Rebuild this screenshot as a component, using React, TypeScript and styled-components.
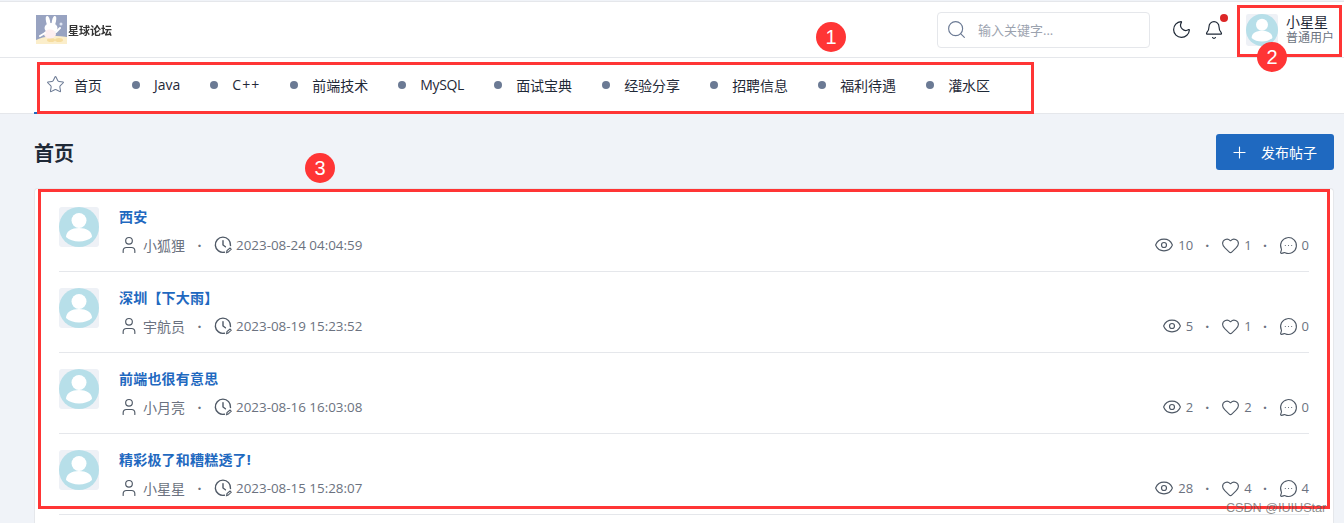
import React from 'react';
import styled, { createGlobalStyle } from 'styled-components';
import { Search, Moon, Bell, Star, Plus, User, Eye, Heart, MessageCircleMore } from 'lucide-react';

const GlobalStyle = createGlobalStyle`
  html, body { margin: 0; padding: 0; height: 523px; overflow: hidden; background: #f0f3f8; }
  body { font-family: "Open Sans", "Noto Sans CJK SC", sans-serif; color: #1f2937; }
  * { box-sizing: border-box; }
`;

const Page = styled.div`
  position: relative;
  width: 1344px;
  height: 523px;
  overflow: hidden;
  display: flex;
  flex-direction: column;
`;

const TopBar = styled.header`
  margin-top: 1px;
  height: 57px;
  flex: none;
  background: #fff;
  border-top: 1px solid #e5e7eb;
  border-bottom: 1px solid #e5e7eb;
  display: flex;
  align-items: center;
  padding: 0 10px 0 36px;
`;

const Brand = styled.div`
  display: flex;
  align-items: center;
  gap: 1px;
  filter: blur(0.35px);
`;

const BrandName = styled.span`
  font-size: 11px;
  font-weight: 700;
  color: #333;
`;

const SearchBox = styled.div`
  margin-left: auto;
  width: 213px;
  height: 36px;
  border: 1px solid #e5e7eb;
  border-radius: 4px;
  display: flex;
  align-items: center;
  gap: 11px;
  padding-left: 8px;
  font-size: 13px;
  color: #9ca3af;
`;

const IconButton = styled.div<{ $left: number }>`
  position: relative;
  margin-left: ${p => p.$left}px;
  display: flex;
  color: #1f2937;
`;

const Badge = styled.span`
  position: absolute;
  top: -6px;
  right: -4px;
  width: 8px;
  height: 8px;
  border-radius: 50%;
  background: #dc2626;
`;

const UserBlock = styled.div`
  margin-left: 22px;
  display: flex;
  align-items: center;
  gap: 8px;
`;

const UserText = styled.div`
  display: flex;
  flex-direction: column;
  line-height: 16px;
`;

const UserName = styled.span`
  font-size: 14px;
  color: #1f2937;
`;

const UserRole = styled.span`
  font-size: 12px;
  color: #6b7280;
`;

const Nav = styled.nav`
  height: 56px;
  flex: none;
  background: #fff;
  border-bottom: 1px solid #e5e7eb;
  display: flex;
  padding: 0 0 2px 34px;
`;

const NavItem = styled.a<{ $active?: boolean; $spacing?: number }>`
  display: flex;
  align-items: center;
  gap: ${p => (p.$active ? 9 : 14)}px;
  padding: 0 30px 0 ${p => (p.$active ? 12 : 0)}px;
  font-size: 14px;
  color: #1f2937;
  letter-spacing: ${p => p.$spacing ?? 0}px;
  white-space: nowrap;
`;

const ActiveMark = styled.span`
  position: absolute;
  left: 34px;
  top: 112px;
  width: 4px;
  height: 2px;
  background: #1f69c0;
`;

const Dot = styled.span`
  width: 8px;
  height: 8px;
  border-radius: 50%;
  background: #6b7a94;
`;

const Main = styled.main`
  flex: 1;
  padding: 20px 10px 0 34px;
  display: flex;
  flex-direction: column;
  min-height: 0;
`;

const TitleRow = styled.div`
  display: flex;
  align-items: center;
  justify-content: space-between;
  height: 36px;
  flex: none;
`;

const PageTitle = styled.h1`
  margin: 0;
  font-size: 20px;
  font-weight: 700;
  color: #1f2937;
`;

const PostButton = styled.button`
  width: 118px;
  height: 36px;
  border: none;
  border-radius: 3px;
  background: #1f69c0;
  color: #fff;
  font: inherit;
  font-size: 14px;
  display: flex;
  align-items: center;
  gap: 12px;
  padding: 0 0 0 14px;
`;

const Card = styled.section`
  margin-top: 18px;
  flex: 1;
  background: #fff;
  border: 1px solid #e5e7eb;
  border-bottom: none;
  border-radius: 4px 4px 0 0;
  padding: 2px 24px 0;
`;

const Row = styled.article`
  height: 81px;
  padding: 16px 0;
  border-bottom: 1px solid #e5e7eb;
  display: flex;
  gap: 20px;
`;

const Body = styled.div`
  flex: 1;
  display: flex;
  flex-direction: column;
  gap: 8px;
`;

const PostTitle = styled.a`
  font-size: 14px;
  line-height: 20px;
  font-weight: 700;
  color: #1f69c0;
  letter-spacing: 0.2px;
`;

const MetaLine = styled.div`
  display: flex;
  align-items: center;
  height: 20px;
  font-size: 14px;
  color: #6b7280;
`;

const MetaGroup = styled.span`
  display: flex;
  align-items: center;
  gap: 4px;
  white-space: nowrap;
  svg { color: #4f5966; }
`;

const TimeText = styled.span`
  font-size: 13.4px;
`;

const StatText = styled.span`
  font-size: 13px;
`;

const Sep = styled.span<{ $width?: number }>`
  width: ${p => p.$width ?? 27}px;
  text-align: center;
  font-weight: 700;
  flex: none;
`;

const Stats = styled.div`
  margin-left: auto;
  display: flex;
  align-items: center;
`;

const Annotation = styled.div`
  position: absolute;
  border: 3px solid #ff3535;
  pointer-events: none;
`;

const NavMarker = styled(Annotation)`
  left: 37px;
  top: 62px;
  width: 997px;
  height: 52px;
`;

const UserMarker = styled(Annotation)`
  left: 1237px;
  top: 5px;
  width: 105px;
  height: 52px;
`;

const ListMarker = styled(Annotation)`
  left: 38px;
  top: 189px;
  width: 1292px;
  height: 320px;
`;

const Pin = styled.span<{ $x: number; $y: number }>`
  position: absolute;
  left: ${p => p.$x - 15}px;
  top: ${p => p.$y - 15}px;
  width: 30px;
  height: 30px;
  border-radius: 50%;
  background: #ff3535;
  color: #fff;
  font-family: "Liberation Sans", sans-serif;
  font-size: 20px;
  display: flex;
  align-items: center;
  justify-content: center;
`;

const Watermark = styled.span`
  position: absolute;
  left: 1226px;
  top: 500px;
  font-family: "Liberation Sans", sans-serif;
  font-size: 12.6px;
  line-height: 16px;
  color: rgba(90, 90, 90, 0.7);
`;

const Avatar: React.FC<{ size: number }> = ({ size }) => (
  <svg width={size} height={size} viewBox="0 0 40 40" style={{ flex: 'none' }}>
    <rect width="40" height="40" rx="3" fill="#eef1f6" />
    <circle cx="20" cy="20" r="20" fill="#b7dfe9" />
    <circle cx="20" cy="13.5" r="7.5" fill="#fff" />
    <path d="M7 30c0-6 6-9 13-9s13 3 13 9c-3 2.800-8 4.500-13 4.500S10 32.800 7 30z" fill="#fff" />
  </svg>
);

const Logo = () => (
  <svg width="31" height="29" viewBox="0 0 31 29">
    <rect width="31" height="29" fill="#98a3c1" />
    <ellipse cx="20" cy="30" rx="24" ry="9" fill="#fbeecb" />
    <ellipse cx="15" cy="25" rx="4" ry="2" fill="#f6dc9f" />
    <ellipse cx="23" cy="25" rx="4" ry="2" fill="#f6dc9f" />
    <ellipse cx="12" cy="6" rx="2" ry="5" fill="#fff" transform="rotate(-12 12 6)" />
    <ellipse cx="18" cy="6" rx="2" ry="5" fill="#fff" transform="rotate(12 18 6)" />
    <ellipse cx="15" cy="13" rx="6.500" ry="5" fill="#fff" />
    <ellipse cx="14" cy="19" rx="6" ry="4.500" fill="#fdeef0" />
    <path d="M9 18l-5 3M20 17l4-4" stroke="#fff" strokeWidth="2" strokeLinecap="round" />
    <circle cx="25" cy="9" r="1.500" fill="#dfe5f3" />
  </svg>
);

// clock with a small pencil tag on its lower right
const ClockEdit = () => (
  <svg width="18" height="18" viewBox="0 0 18 18" fill="none" stroke="currentColor" strokeWidth="1.4" strokeLinecap="round" style={{ flex: 'none' }}>
    <path d="M10.500 16.200A7.600 7.600 0 1 1 16.500 9.500" />
    <path d="M9 4.600V9l2.400 1.800" />
    <path d="M12.600 16.600l.4-2 3-2.600 1.200 1.300-3 2.800z" strokeWidth="1.100" />
  </svg>
);

const TABS = [
  { label: 'Java' },
  { label: 'C++', spacing: 1 },
  { label: '前端技术' },
  { label: 'MySQL', spacing: -0.3 },
  { label: '面试宝典' },
  { label: '经验分享' },
  { label: '招聘信息' },
  { label: '福利待遇' },
  { label: '灌水区' },
];

const POSTS = [
  { title: '西安', author: '小狐狸', time: '2023-08-24 04:04:59', views: 10, likes: 1, comments: 0 },
  { title: '深圳【下大雨】', author: '宇航员', time: '2023-08-19 15:23:52', views: 5, likes: 1, comments: 0 },
  { title: '前端也很有意思', author: '小月亮', time: '2023-08-16 16:03:08', views: 2, likes: 2, comments: 0 },
  { title: '精彩极了和糟糕透了!', author: '小星星', time: '2023-08-15 15:28:07', views: 28, likes: 4, comments: 4 },
];

export default function App() {
  return (
    <Page>
      <GlobalStyle />
      <TopBar>
        <Brand>
          <Logo />
          <BrandName>星球论坛</BrandName>
        </Brand>
        <SearchBox>
          <Search size={21} strokeWidth={1.3} color="#6b7a94" />
          输入关键字...
        </SearchBox>
        <IconButton $left={21}>
          <Moon size={21} strokeWidth={1.4} />
        </IconButton>
        <IconButton $left={12}>
          <Bell size={20} strokeWidth={1.4} />
          <Badge />
        </IconButton>
        <UserBlock>
          <Avatar size={32} />
          <UserText>
            <UserName>小星星</UserName>
            <UserRole>普通用户</UserRole>
          </UserText>
        </UserBlock>
      </TopBar>

      <Nav>
        <NavItem $active>
          <Star size={19} strokeWidth={1.3} color="#6b7a94" />
          首页
        </NavItem>
        {TABS.map(tab => (
          <NavItem key={tab.label} $spacing={tab.spacing}>
            <Dot />
            {tab.label}
          </NavItem>
        ))}
      </Nav>
      <ActiveMark />

      <Main>
        <TitleRow>
          <PageTitle>首页</PageTitle>
          <PostButton>
            <Plus size={19} strokeWidth={1.4} />
            发布帖子
          </PostButton>
        </TitleRow>
        <Card>
          {POSTS.map(post => (
            <Row key={post.title}>
              <Avatar size={40} />
              <Body>
                <PostTitle>{post.title}</PostTitle>
                <MetaLine>
                  <MetaGroup>
                    <User size={20} strokeWidth={1.4} />
                    {post.author}
                  </MetaGroup>
                  <Sep $width={29}>·</Sep>
                  <MetaGroup>
                    <ClockEdit />
                    <TimeText>{post.time}</TimeText>
                  </MetaGroup>
                  <Stats>
                    <MetaGroup>
                      <Eye size={20} strokeWidth={1.4} />
                      <StatText>{post.views}</StatText>
                    </MetaGroup>
                    <Sep $width={28}>·</Sep>
                    <MetaGroup>
                      <Heart size={19} strokeWidth={1.4} />
                      <StatText>{post.likes}</StatText>
                    </MetaGroup>
                    <Sep>·</Sep>
                    <MetaGroup>
                      <MessageCircleMore size={19} strokeWidth={1.4} />
                      <StatText>{post.comments}</StatText>
                    </MetaGroup>
                  </Stats>
                </MetaLine>
              </Body>
            </Row>
          ))}
        </Card>
      </Main>

      <NavMarker />
      <UserMarker />
      <ListMarker />
      <Pin $x={831} $y={37}>1</Pin>
      <Pin $x={1272} $y={57}>2</Pin>
      <Pin $x={320} $y={168}>3</Pin>
      <Watermark>CSDN @IUIUStar</Watermark>
    </Page>
  );
}
